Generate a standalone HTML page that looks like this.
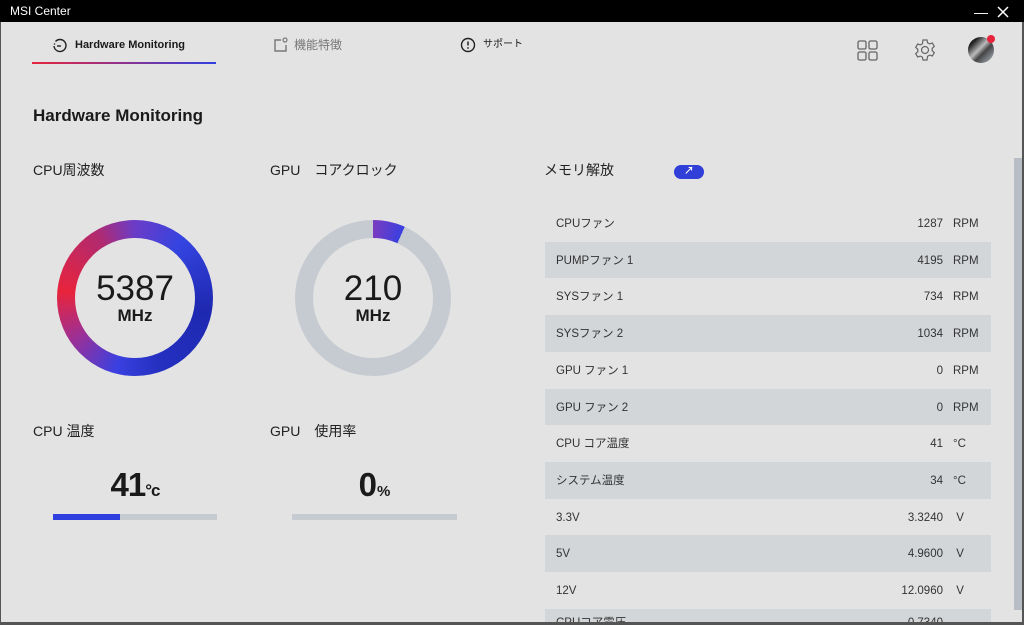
<!DOCTYPE html>
<html><head><meta charset="utf-8"><style>
*{margin:0;padding:0;box-sizing:border-box}
body{width:1024px;height:625px;overflow:hidden;background:#e3e3e3;font-family:"Liberation Sans","Noto Sans CJK JP",sans-serif;color:#1a1a1a;position:relative}
.abs{position:absolute}
.tb{left:0;top:0;width:1024px;height:22px;background:#000;color:#fff;font-size:12px;line-height:22px;padding-left:10px}
.tab{font-size:12px;top:38px;line-height:14px}
.lbl{font-size:14px;color:#222}
.ring{width:156px;height:156px;border-radius:50%}
.ring .in{position:absolute;left:18px;top:18px;width:120px;height:120px;border-radius:50%;background:#e3e3e3}
.big{font-size:35px;text-align:center;width:156px;line-height:36px}
.unit{font-size:17px;font-weight:bold;text-align:center;width:156px}
.row{left:545px;width:446px;height:36.7px;font-size:11.5px;color:#333;line-height:38px}
.row .n{position:absolute;left:11px}
.row .v{position:absolute;right:48px}
.row .u{position:absolute;left:408px}
.sh{background:#d3d6d9}
</style></head><body>
<div class="abs tb">MSI Center</div>
<div class="abs" style="left:974px;top:4px;color:#fff;font-size:14px">&#8212;</div>
<svg class="abs" style="left:997px;top:6px" width="12" height="12"><path d="M1 1L11 11M11 1L1 11" stroke="#fff" stroke-width="1.5"/></svg>
<div class="abs" style="left:0;top:22px;width:1px;height:603px;background:#555"></div>
<div class="abs" style="right:0;top:22px;width:2px;height:603px;background:#555"></div>

<svg class="abs" style="left:52px;top:38px" width="16" height="16"><path d="M3.5 3.5A6 6 0 1 1 2 8" fill="none" stroke="#222" stroke-width="1.4"/><path d="M5 8h4" stroke="#222" stroke-width="1.4"/><circle cx="2.5" cy="6" r=".8" fill="#222"/></svg>
<div class="abs tab" style="left:75px;font-weight:bold;font-size:11px">Hardware Monitoring</div>
<div class="abs" style="left:32px;top:62px;width:184px;height:2px;background:linear-gradient(90deg,#e8243c,#3040e0)"></div>
<svg class="abs" style="left:272px;top:37px" width="17" height="16"><path d="M9 3H3v11h11V8" fill="none" stroke="#777" stroke-width="1.4"/><circle cx="13" cy="3" r="2" fill="none" stroke="#777" stroke-width="1.2"/></svg>
<div class="abs tab" style="left:294px;color:#777">機能特徴</div>
<svg class="abs" style="left:460px;top:37px" width="16" height="16"><circle cx="8" cy="8" r="6.5" fill="none" stroke="#222" stroke-width="1.4"/><path d="M8 4.5v4" stroke="#222" stroke-width="1.5"/><circle cx="8" cy="11" r=".9" fill="#222"/></svg>
<div class="abs tab" style="left:483px;font-size:10px">サポート</div>

<svg class="abs" style="left:857px;top:40px" width="22" height="22" fill="none" stroke="#666" stroke-width="1.3"><rect x="1" y="1" width="8" height="8" rx="1.5"/><rect x="12" y="1" width="8" height="8" rx="1.5"/><rect x="1" y="12" width="8" height="8" rx="1.5"/><rect x="12" y="12" width="8" height="8" rx="1.5"/></svg>
<svg class="abs" style="left:913px;top:38px" width="24" height="24" fill="none" stroke="#666" stroke-width="1.2"><path d="M10 2h4l.6 2.8 2 1.1 2.7-.9 2 3.4-2.1 1.9v2.4l2.1 1.9-2 3.4-2.7-.9-2 1.1L14 22h-4l-.6-2.8-2-1.1-2.7.9-2-3.4 2.1-1.9V11.3L2.7 9.4l2-3.4 2.7.9 2-1.1z"/><circle cx="12" cy="12" r="3.5"/></svg>
<div class="abs" style="left:968px;top:37px;width:26px;height:26px;border-radius:50%;background:linear-gradient(135deg,#222 20%,#bbb 45%,#444 60%,#8a9098 85%)"></div>
<div class="abs" style="left:987px;top:35px;width:8px;height:8px;border-radius:50%;background:#e8243c"></div>

<div class="abs" style="left:33px;top:106px;font-size:17px;font-weight:bold">Hardware Monitoring</div>

<div class="abs lbl" style="left:33px;top:160px">CPU周波数</div>
<div class="abs lbl" style="left:270px;top:160px">GPU　コアクロック</div>
<div class="abs ring" style="left:57px;top:220px;background:conic-gradient(#6a3cc8 0deg,#3444e0 40deg,#1e28b0 100deg,#2430c0 160deg,#3a40e0 195deg,#9a3098 235deg,#e8243c 275deg,#b02a70 330deg,#6a3cc8 360deg)"><div class="in"></div></div>
<div class="abs big" style="left:57px;top:271px">5387</div>
<div class="abs unit" style="left:57px;top:306px">MHz</div>
<div class="abs ring" style="left:295px;top:220px;background:conic-gradient(#7a3cc0 0deg,#3a40e0 24deg,#c6cbd1 24deg)"><div class="in"></div></div>
<div class="abs big" style="left:295px;top:271px">210</div>
<div class="abs unit" style="left:295px;top:306px">MHz</div>

<div class="abs lbl" style="left:33px;top:421px">CPU 温度</div>
<div class="abs lbl" style="left:270px;top:421px">GPU　使用率</div>
<div class="abs" style="left:53px;top:466px;width:164px;text-align:center;font-size:33px;font-weight:bold;letter-spacing:-1px">41<span style="font-size:17px">°c</span></div>
<div class="abs" style="left:292px;top:466px;width:165px;text-align:center;font-size:33px;font-weight:bold">0<span style="font-size:15px">%</span></div>
<div class="abs" style="left:53px;top:514px;width:164px;height:6px;background:#c6cbd1"><div style="width:67px;height:6px;background:#3040e0"></div></div>
<div class="abs" style="left:292px;top:514px;width:165px;height:6px;background:#c6cbd1"></div>

<div class="abs lbl" style="left:544px;top:160px">メモリ解放</div>
<div class="abs" style="left:674px;top:165px;width:30px;height:14px;border-radius:7px;background:#2f3fd8;color:#fff;font-size:10px;text-align:center;line-height:14px;font-weight:bold">↗</div>

<div class="abs row" style="top:205px"><span class="n">CPUファン</span><span class="v">1287</span><span class="u">RPM</span></div>
<div class="abs row sh" style="top:241.7px"><span class="n">PUMPファン 1</span><span class="v">4195</span><span class="u">RPM</span></div>
<div class="abs row" style="top:278.4px"><span class="n">SYSファン 1</span><span class="v">734</span><span class="u">RPM</span></div>
<div class="abs row sh" style="top:315.1px"><span class="n">SYSファン 2</span><span class="v">1034</span><span class="u">RPM</span></div>
<div class="abs row" style="top:351.8px"><span class="n">GPU ファン 1</span><span class="v">0</span><span class="u">RPM</span></div>
<div class="abs row sh" style="top:388.5px"><span class="n">GPU ファン 2</span><span class="v">0</span><span class="u">RPM</span></div>
<div class="abs row" style="top:425.2px"><span class="n">CPU コア温度</span><span class="v">41</span><span class="u">°C</span></div>
<div class="abs row sh" style="top:461.9px"><span class="n">システム温度</span><span class="v">34</span><span class="u">°C</span></div>
<div class="abs row" style="top:498.6px"><span class="n">3.3V</span><span class="v">3.3240</span><span class="u">&nbsp;V</span></div>
<div class="abs row sh" style="top:535.3px"><span class="n">5V</span><span class="v">4.9600</span><span class="u">&nbsp;V</span></div>
<div class="abs row" style="top:572px"><span class="n">12V</span><span class="v">12.0960</span><span class="u">&nbsp;V</span></div>
<div class="abs row sh" style="top:608.7px;height:14px;overflow:hidden;line-height:14px"><span class="n" style="top:7px">CPUコア電圧</span><span class="v" style="top:7px">0.7340</span></div>

<div class="abs" style="left:1014px;top:158px;width:8px;height:452px;background:#b8bcc4"></div>
<div class="abs" style="left:0;top:622px;width:1024px;height:3px;background:#555"></div>
</body></html>
